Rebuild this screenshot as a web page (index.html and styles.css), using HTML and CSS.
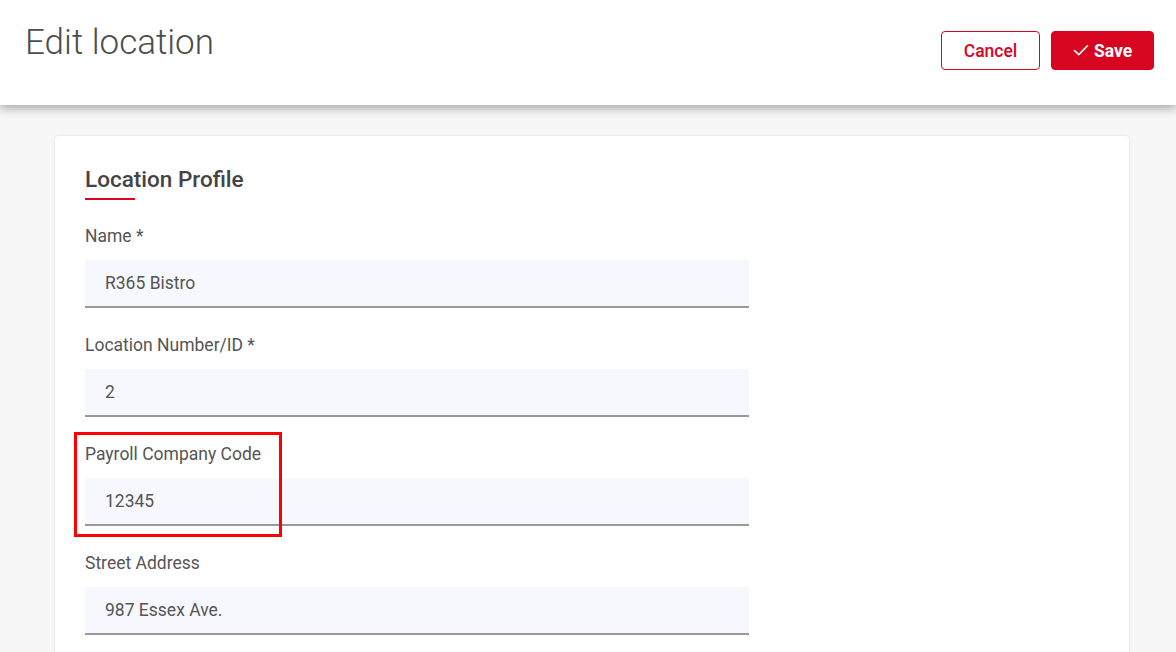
FILE: index.html
```html
<!DOCTYPE html>
<html>
<head>
<meta charset="utf-8">
<link rel="stylesheet" href="styles.css">
</head>
<body>
<header class="topbar">
  <h1 class="title">Edit location</h1>
  <div class="actions">
    <button class="btn btn-outline">Cancel</button>
    <button class="btn btn-primary"><svg class="check" viewBox="0 0 16 16" width="16" height="16"><path d="M1.5 8.5 L5.8 12.6 L14.5 3.8" fill="none" stroke="#fff" stroke-width="1.6" stroke-linecap="round" stroke-linejoin="round"/></svg>Save</button>
  </div>
</header>
<main class="content">
  <section class="card">
    <h2 class="section-title">Location Profile</h2>
    <div class="field">
      <label class="label">Name *</label>
      <div class="input">R365 Bistro</div>
    </div>
    <div class="field">
      <label class="label">Location Number/ID *</label>
      <div class="input">2</div>
    </div>
    <div class="field highlighted">
      <label class="label">Payroll Company Code</label>
      <div class="input">12345</div>
      <div class="highlight-box"></div>
    </div>
    <div class="field">
      <label class="label">Street Address</label>
      <div class="input">987 Essex Ave.</div>
    </div>
  </section>
</main>
</body>
</html>
```
FILE: styles.css
```css
* { box-sizing: border-box; }
html, body {
  margin: 0;
  padding: 0;
  height: 652px;
  overflow: hidden;
}
body {
  background: #f7f7f7;
  font-family: Roboto, "Liberation Sans", sans-serif;
  color: #4a4a4a;
}
.topbar {
  position: relative;
  z-index: 2;
  height: 105px;
  background: #fff;
  display: flex;
  justify-content: space-between;
  align-items: flex-start;
  padding: 0 22px 0 25px;
  box-shadow: 0 3px 10px rgba(0,0,0,0.35);
}
.title {
  margin: 23px 0 0 0;
  font-weight: 300;
  font-size: 35px;
  line-height: 40px;
  color: #4d4d4d;
}
.actions {
  display: flex;
  gap: 11px;
  margin-top: 31px;
}
.btn {
  height: 39px;
  border-radius: 4px;
  font-family: Roboto, "Liberation Sans", sans-serif;
  font-size: 17.5px;
  padding: 0;
  display: flex;
  align-items: center;
  justify-content: center;
  cursor: pointer;
}
.btn-outline {
  width: 99px;
  background: #fff;
  border: 1px solid #d7051f;
  color: #d7051f;
  font-weight: 500;
}
.btn-primary {
  width: 103px;
  background: #d7051f;
  border: 1px solid #d7051f;
  color: #fff;
  font-weight: 700;
  gap: 5px;
}
.check { display: block; margin-top: -1px; }
.content {
  padding: 31px 47px 0 55px;
}
.card {
  background: #fff;
  border-radius: 4px;
  box-shadow: 0 0 3px rgba(0,0,0,0.12);
  padding: 27px 30px 40px 30px;
  min-height: 600px;
}
.section-title {
  margin: 0;
  font-size: 22.5px;
  font-weight: 500;
  line-height: 32px;
  color: #444;
  position: relative;
  padding-bottom: 5px;
}
.section-title::after {
  content: "";
  position: absolute;
  left: 0;
  bottom: 0;
  width: 50px;
  height: 2px;
  background: #d7051f;
}
.field {
  position: relative;
  width: 664px;
  padding-top: 25px;
}
.section-title + .field { padding-top: 24px; }
.label {
  display: block;
  font-size: 17.5px;
  line-height: 24px;
  color: #555;
  margin-bottom: 12px;
}
.input {
  height: 48px;
  background: #f7f8fd;
  border-bottom: 2px solid #9a9a9a;
  padding: 0 20px;
  font-size: 17.5px;
  line-height: 47px;
  color: #555;
}
.highlight-box {
  position: absolute;
  left: -11px;
  top: 15px;
  width: 208px;
  height: 105px;
  border: 3px solid #f00;
}
```
